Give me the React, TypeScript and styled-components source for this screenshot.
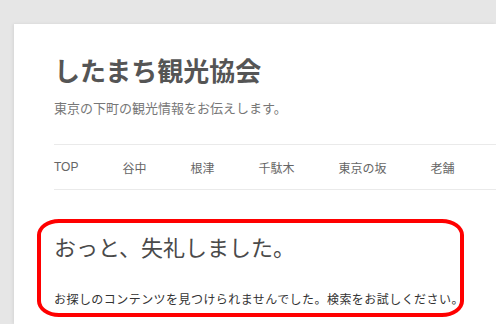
import React from 'react';
import styled, { createGlobalStyle } from 'styled-components';

const GlobalStyle = createGlobalStyle`
  html, body {
    margin: 0;
    padding: 0;
    background: #e6e6e6;
    overflow: hidden;
  }
  body {
    font-family: "Noto Sans CJK JP", "Liberation Sans", sans-serif;
  }
`;

const Page = styled.div`
  padding: 24px 0 0 14px;
  width: 496px;
  height: 324px;
  box-sizing: border-box;
  overflow: hidden;
`;

const Panel = styled.div`
  position: relative;
  width: 482px;
  height: 300px;
  background: #fff;
  box-shadow: -1px 0 3px rgba(0, 0, 0, 0.08);
  padding: 0 0 0 40px;
  box-sizing: border-box;
`;

const Header = styled.header`
  padding-top: 28px;
`;

const SiteTitle = styled.h1`
  margin: 0;
  font-size: 26px;
  line-height: 36px;
  font-weight: 700;
  color: #555;
`;

const Tagline = styled.p`
  margin: 10px 0 0;
  font-size: 13px;
  line-height: 20px;
  color: #777;
`;

const Nav = styled.nav`
  margin-top: 26px;
  border-top: 1px solid #eaeaea;
  border-bottom: 1px solid #eaeaea;
  height: 44px;
  display: flex;
  align-items: center;
  gap: 44px;
`;

const NavItem = styled.a<{ $latin?: boolean }>`
  font-size: 12px;
  color: #666;
  text-decoration: none;
  white-space: nowrap;
  font-family: ${(p) =>
    p.$latin ? '"Liberation Sans", sans-serif' : '"Noto Sans CJK JP", sans-serif'};
`;

const Content = styled.section`
  padding-top: 41px;
`;

const Heading = styled.h2`
  margin: 0;
  font-size: 22px;
  line-height: 30px;
  font-weight: 400;
  color: #4a4a4a;
`;

const Message = styled.p`
  margin: 29px 0 0;
  font-size: 12px;
  line-height: 18px;
  letter-spacing: 0.45px;
  white-space: nowrap;
  color: #333;
`;

const Marker = styled.div`
  position: absolute;
  left: 23px;
  top: 195px;
  width: 427px;
  height: 98px;
  box-sizing: border-box;
  border: 4px solid #ff0000;
  border-radius: 22px / 16px;
  pointer-events: none;
`;

const navItems = ['谷中', '根津', '千駄木', '東京の坂', '老舗'];

export default function App() {
  return (
    <>
      <GlobalStyle />
      <Page>
        <Panel>
          <Header>
            <SiteTitle>したまち観光協会</SiteTitle>
            <Tagline>東京の下町の観光情報をお伝えします。</Tagline>
          </Header>
          <Nav>
            <NavItem $latin href="#">TOP</NavItem>
            {navItems.map((item) => (
              <NavItem key={item} href="#">
                {item}
              </NavItem>
            ))}
          </Nav>
          <Content>
            <Heading>おっと、失礼しました。</Heading>
            <Message>お探しのコンテンツを見つけられませんでした。検索をお試しください。</Message>
          </Content>
          <Marker />
        </Panel>
      </Page>
    </>
  );
}
